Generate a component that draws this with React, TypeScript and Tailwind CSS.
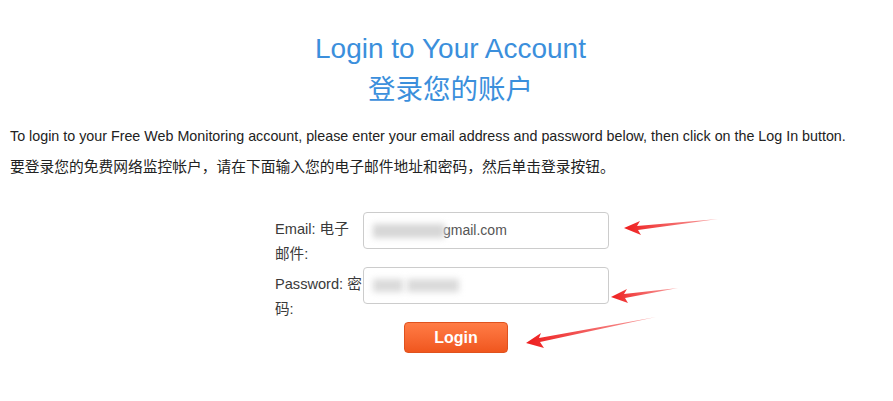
import React from "react";

export default function App() {
  const font = { fontFamily: '"Liberation Sans", Arial, "Noto Sans CJK SC", sans-serif' };
  return (
    <div className="relative w-[893px] h-[401px] bg-white overflow-hidden text-[#333]" style={font}>
      <div className="pt-[31px] flex flex-col items-center text-[#3b8fdc] pl-[8px]">
        <h1 className="text-[28px] leading-[36px]">Login to Your Account</h1>
        <h2 className="text-[27.5px] leading-[36px] mt-[5px]">登录您的账户</h2>
      </div>
      <div className="px-[10px] mt-[18px] text-[14.3px] leading-[20px] text-[#222]">
        <p className="whitespace-nowrap">To login to your Free Web Monitoring account, please enter your email address and password below, then click on the Log In button.</p>
        <p className="mt-[11px] text-[14.75px] whitespace-nowrap">要登录您的免费网络监控帐户，请在下面输入您的电子邮件地址和密码，然后单击登录按钮。</p>
      </div>
      <div className="pl-[275px] mt-[35px] flex flex-col text-[14.6px] text-[#3a3a3a]">
        <div className="flex h-[37px]">
          <div className="w-[88px] pt-[5px] leading-[25px] whitespace-nowrap">
            Email: 电子<br />邮件:
          </div>
          <div className="w-[246px] h-[37px] border border-[#ccc] rounded-[4px] flex items-center pl-[9px] text-[14px] text-[#555]">
            <span className="inline-block w-[72px] h-[14px] bg-[#d6d6d6] blur-[3px]" />
            <span className="-ml-[2px]">gmail.com</span>
          </div>
        </div>
        <div className="flex h-[37px] mt-[18px]">
          <div className="w-[88px] pt-[5px] leading-[25px] whitespace-nowrap">
            Password: 密<br />码:
          </div>
          <div className="w-[246px] h-[37px] border border-[#ccc] rounded-[4px] flex items-center pl-[9px] gap-[4px]">
            <span className="inline-block w-[30px] h-[13px] bg-[#dadada] blur-[3px]" />
            <span className="inline-block w-[52px] h-[13px] bg-[#dadada] blur-[3px]" />
          </div>
        </div>
        <div className="pl-[129px] mt-[18px]">
          <button className="w-[104px] h-[31px] rounded-[4px] border border-[#e0521e] bg-gradient-to-b from-[#ff7c45] to-[#f0561d] text-white font-bold text-[16px]">
            Login
          </button>
        </div>
      </div>
      <svg className="absolute left-0 top-0 pointer-events-none" width="893" height="401">
        <defs>
          <linearGradient id="g" x1="0" x2="1">
            <stop offset="0" stopColor="#ee1d1d" />
            <stop offset="1" stopColor="#ee1d1d" stopOpacity="0.4" />
          </linearGradient>
        </defs>
        <polygon points="624,228 640,221 637,226 718,219 638,230 641,235" fill="url(#g)" />
        <polygon points="611,297 627,289 624,294 678,288 625,298 628,303" fill="url(#g)" />
        <polygon points="526,343 541,333 539,338 656,317 540,342 544,348" fill="url(#g)" />
      </svg>
    </div>
  );
}
